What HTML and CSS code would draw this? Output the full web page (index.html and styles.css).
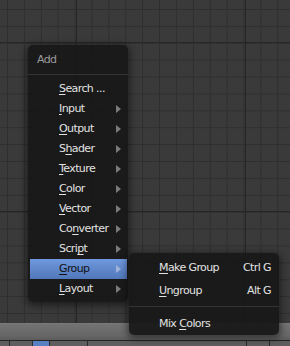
FILE: index.html
```html
<!doctype html>
<html lang="en">
    <head>
        <title>Node Editor - Add</title>
        <link rel="stylesheet" href="styles.css">
    </head>
    <body>
        <div class="editor">
            <div class="canvas"></div>
            <div class="header">
                <div class="header-bar"></div>
                <div class="header-tools">
                    <span class="tool w10"></span>
                    <span class="tool w23"></span>
                    <span class="tool active w17"></span>
                    <span class="tool w38"></span>
                    <span class="tool w159"></span>
                    <span class="tool w23"></span>
                    <span class="tool grow"></span>
                </div>
            </div>
        </div>

        <div class="menu add-menu">
            <div class="menu-title">Add</div>
            <div class="menu-sep"></div>
            <div class="menu-list">
                <div class="item"><span class="label"><u>S</u>earch ...</span></div>
                <div class="item"><span class="label"><u>I</u>nput</span><span class="arrow"></span></div>
                <div class="item"><span class="label"><u>O</u>utput</span><span class="arrow"></span></div>
                <div class="item"><span class="label">S<u>h</u>ader</span><span class="arrow"></span></div>
                <div class="item"><span class="label"><u>T</u>exture</span><span class="arrow"></span></div>
                <div class="item"><span class="label"><u>C</u>olor</span><span class="arrow"></span></div>
                <div class="item"><span class="label"><u>V</u>ector</span><span class="arrow"></span></div>
                <div class="item"><span class="label">Co<u>n</u>verter</span><span class="arrow"></span></div>
                <div class="item"><span class="label">Scri<u>p</u>t</span><span class="arrow"></span></div>
                <div class="item selected"><span class="label"><u>G</u>roup</span><span class="arrow"></span></div>
                <div class="item"><span class="label"><u>L</u>ayout</span><span class="arrow"></span></div>
            </div>
        </div>

        <div class="menu group-menu">
            <div class="item wide first"><span class="label"><u>M</u>ake Group</span><span class="keys">Ctrl G</span></div>
            <div class="item wide"><span class="label"><u>U</u>ngroup</span><span class="keys">Alt G</span></div>
            <div class="menu-sep sub-sep"></div>
            <div class="item wide"><span class="label">Mix <u>C</u>olors</span></div>
        </div>
    </body>
</html>
```

FILE: styles.css
```css
html, body{
    margin: 0;
    padding: 0;
}
body{
    width: 290px;
    height: 346px;
    overflow: hidden;
    position: relative;
    background: #393939;
    font-family: "DejaVu Sans", "Liberation Sans", sans-serif;
    font-size: 11px;
}
.editor{
    height: 346px;
    display: flex;
    flex-direction: column;
}
.canvas{
    flex: 1;
    background-color: #3a3a3a;
    background-image:
        linear-gradient(to right, #262626 1px, transparent 1px),
        linear-gradient(to bottom, #262626 1px, transparent 1px),
        linear-gradient(to right, #2f2f2f 1px, transparent 1px),
        linear-gradient(to bottom, #2f2f2f 1px, transparent 1px);
    background-size: 169px 169px, 169px 169px, 16.9px 16.9px, 16.9px 16.9px;
    background-position: 76px 0, 0 42px, 7px 9px, 7px 9px;
}
.header{
    height: 23px;
    display: flex;
    flex-direction: column;
}
.header-bar{
    height: 17px;
    background: linear-gradient(#7c7c7c 0, #737373 1px, #666666 13px, #5c5c5c 100%);
    border-bottom: 1px solid #242424;
}
.header-tools{
    flex: 1;
    display: flex;
    background: #585858;
}
.tool{
    border-right: 1px solid #2b2b2b;
    background: #5e5e5e;
}
.tool.active{
    background: #5680c2;
}
.w10{ width: 9px; }
.w23{ width: 22px; }
.w17{ width: 16px; }
.w38{ width: 37px; }
.w159{ width: 158px; }
.grow{ flex: 1; border-right: none; }

/* popup menus */
.menu{
    position: absolute;
    background: rgba(24, 24, 24, 0.95);
    border-radius: 5px;
    box-shadow: 0 2px 7px 2px rgba(0, 0, 0, 0.45);
    color: #e2e2e2;
}
.add-menu{
    left: 28px;
    top: 45px;
    width: 100px;
    height: 257px;
}
.menu-title{
    height: 29px;
    line-height: 29px;
    padding-left: 9px;
    color: #9a9a9a;
    letter-spacing: -0.6px;
}
.menu-sep{
    height: 1px;
    background: #333333;
}
.menu-list{
    padding-top: 4px;
    display: flex;
    flex-direction: column;
}
.item{
    height: 20px;
    line-height: 20px;
    margin: 0 1px 0 2px;
    padding: 0 6px 0 29px;
    display: flex;
    align-items: center;
    justify-content: space-between;
    letter-spacing: -0.6px;
    white-space: nowrap;
}
.item u{
    text-decoration: underline;
    text-underline-offset: 2px;
}
.item.selected{
    background: linear-gradient(#6f99de, #5077b9);
    color: #111111;
}
.arrow{
    width: 0;
    height: 0;
    border-left: 5px solid #7b7b7b;
    border-top: 4px solid transparent;
    border-bottom: 4px solid transparent;
}
.selected .arrow{
    border-left-color: #9fb4d8;
}

.group-menu{
    left: 129px;
    top: 253px;
    width: 150px;
    height: 82px;
    padding-top: 5px;
    box-sizing: border-box;
}
.item.wide{
    margin: 0;
    padding: 0 8px 0 30px;
}
.item.first{
    margin-bottom: 3px;
}
.keys{
    color: #e2e2e2;
}
.sub-sep{
    margin: 5px 0 7px 0;
}
```
